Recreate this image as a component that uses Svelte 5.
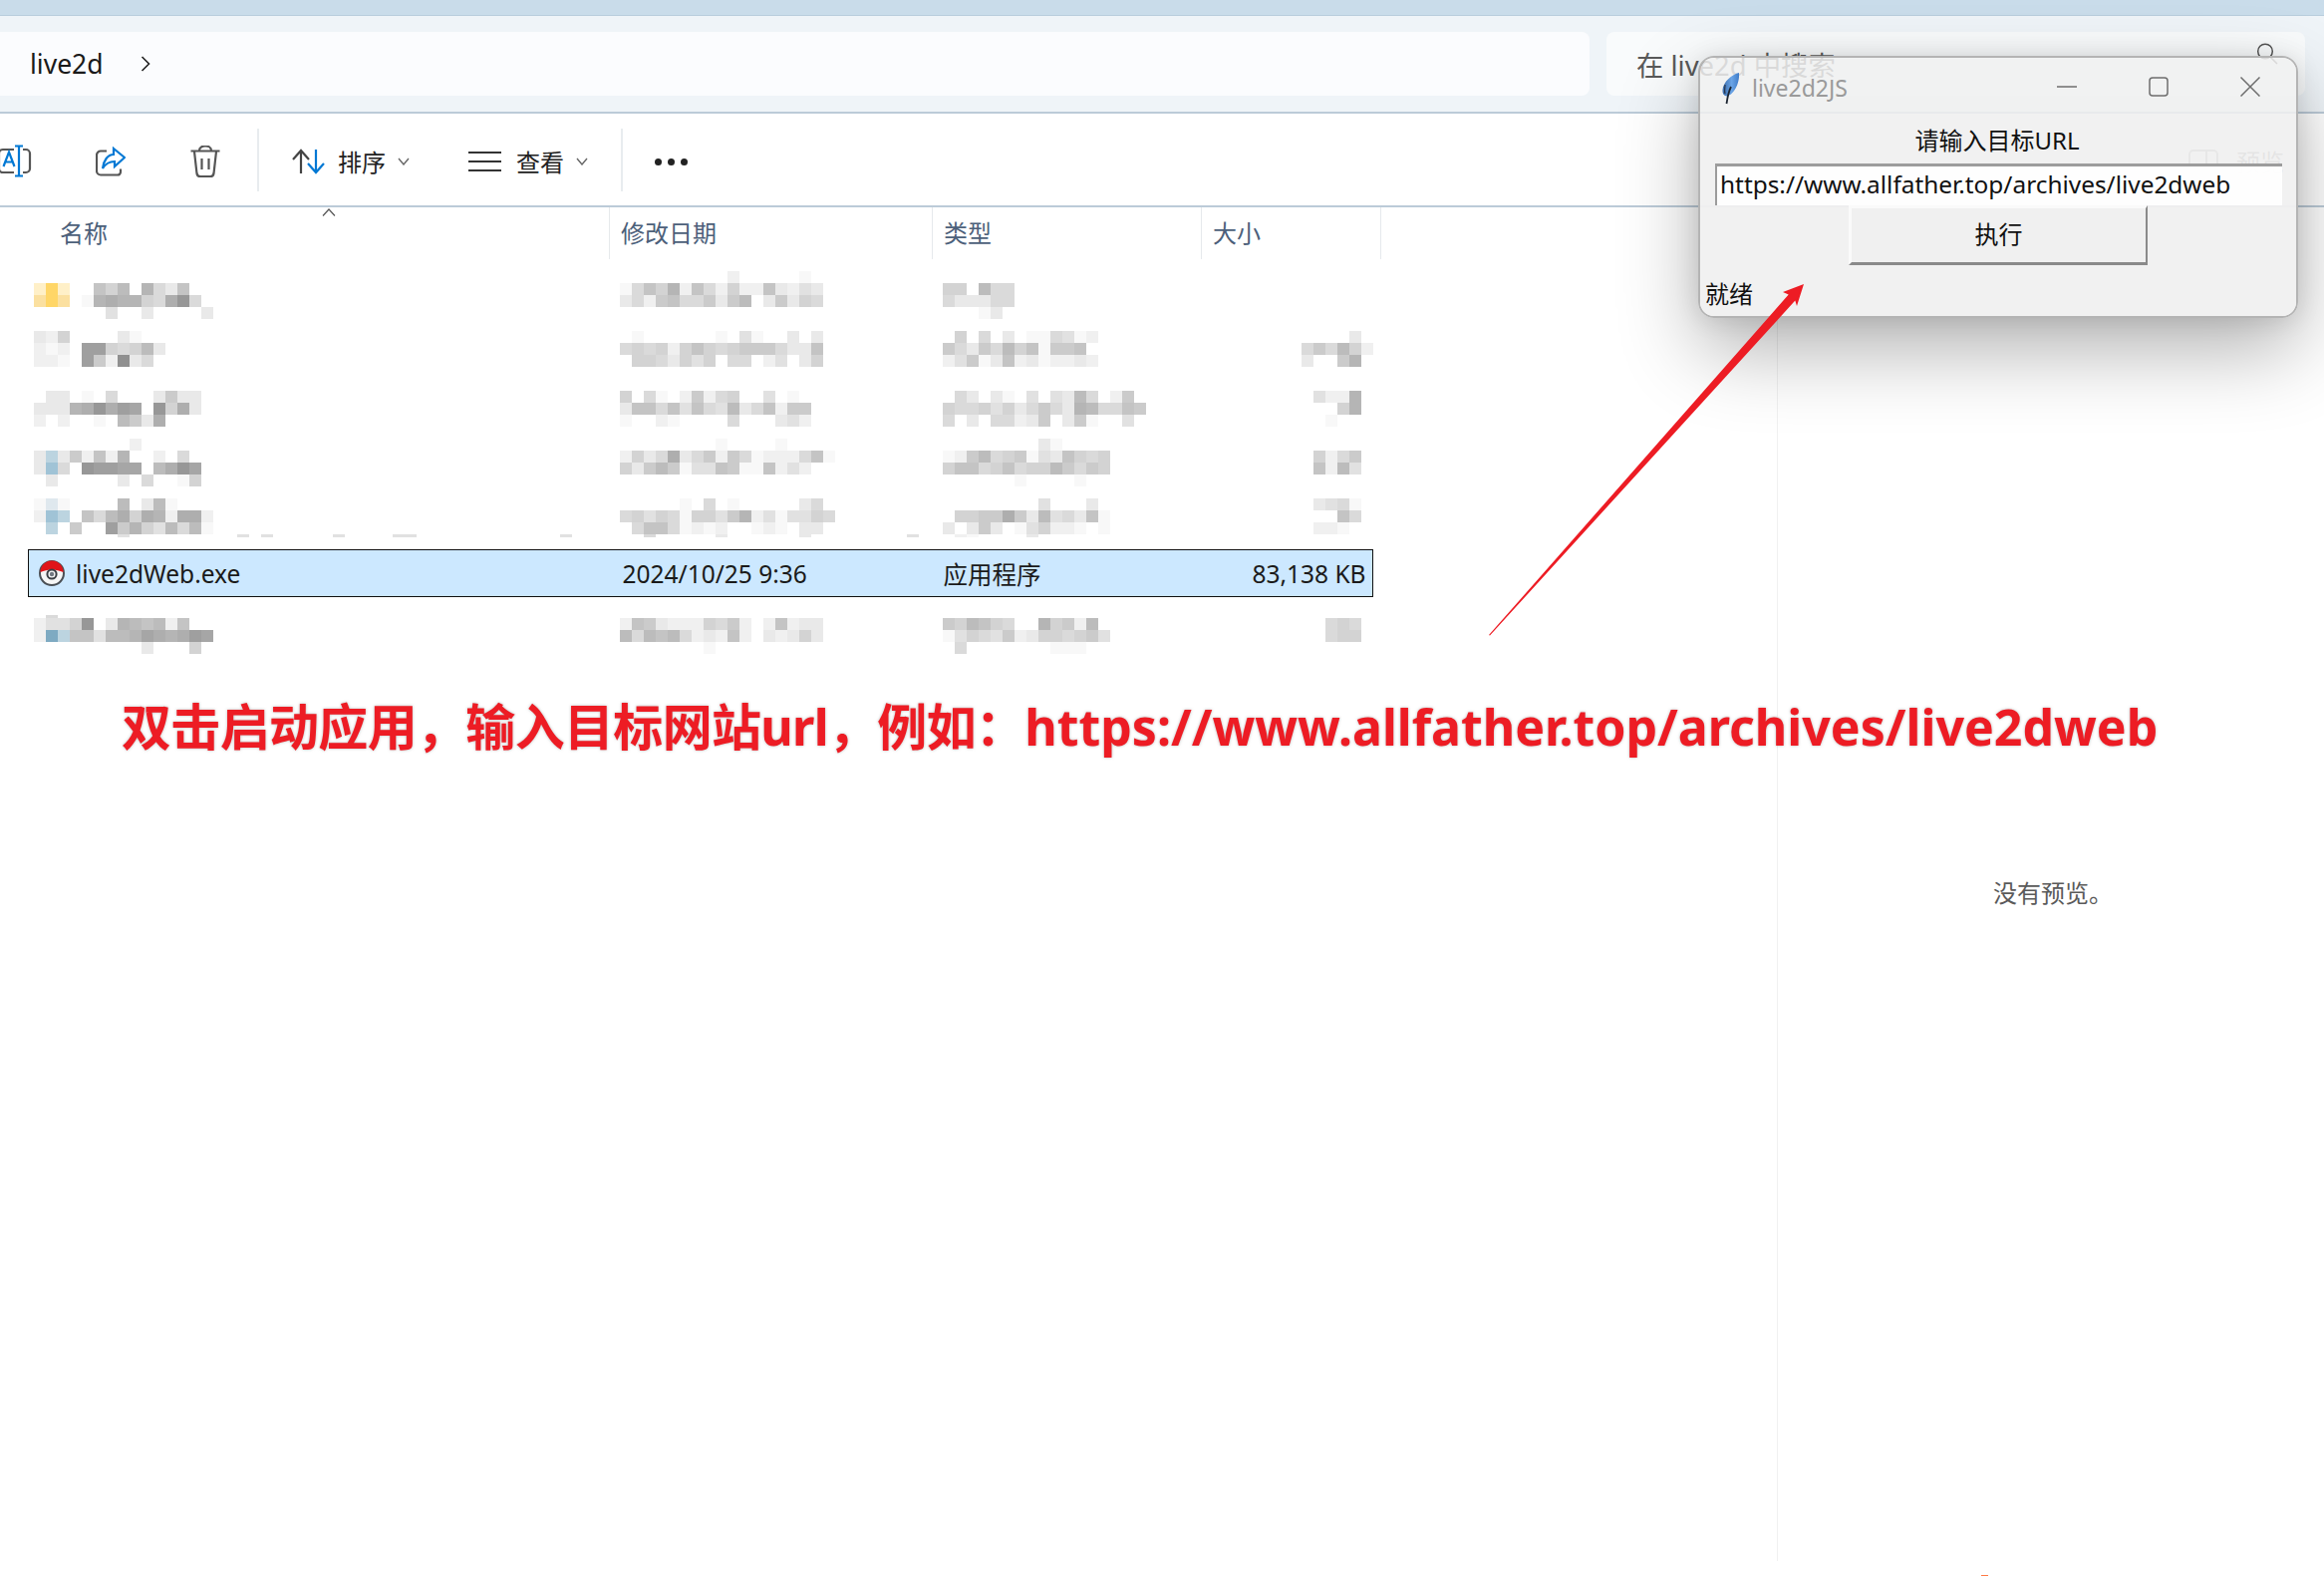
<script>
	const tints = { Y: '#ffd667', y: '#fff0c8', Z: '#fbe0a0', B: '#a0c3d6', C: '#bcd4e0', D: '#dfe8ee', G: '#7eaac2' };

	// blurred file rows: one string per 12px line, hex digit = grey level
	const rows = [
		{
			gap: 0,
			name: ['', 'yYy..796.5ac7', 'ZYZ.e54559a41a', '......b..c....c'],
			date: ['.........d.....e', 'ea795d7ad9dd7cdbc', 'cad87aa8c86.c8c9a', ''],
			type: ['', '99.6aa', 'acccaa', '...ec'],
			size: []
		},
		{
			gap: 12,
			name: ['cd9....ce', 'ded.229a96c', 'dde.28d0ca'],
			date: ['.e......e.be..c.c', 'a9a9d979a9888acc7', '.99ac9b9.aa.db.c9'],
			type: ['.9.a.c.eeabed', '8ac8a697e887', 'db8ec7dceddcd'],
			size: ['....c', 'a8a69d', 'c..85']
		},
		{
			gap: 24,
			name: ['.cc.e.a...c8cc', 'ccc541423.194c', 'd.d..e.68c4'],
			date: ['9.ae.d8da9..b.e', 'c77a7b7ab6ca7d88', 'e..de....a...cbd'],
			type: ['.ac.ce.b.bc6a.d8', '9aa9b9ca8ac56aa78', 'a.c.aadc8.c8e..b'],
			size: ['.bdd5', '...95', '..e']
		},
		{
			gap: 12,
			name: ['........d', 'cCc8d7d5..d.a', 'cBa.12233.6413', '.c.....c.a..e9'],
			date: ['........e....e', 'd9ca4ca8d8aeddda7e', '9c868ebb78ee7dbd', ''],
			type: ['........ce', 'ed86a98ebc79a9', '977a97a9968a89', '......e....e'],
			size: ['', '.9da8', '.7d6b', '']
		},
		{
			gap: 12,
			name: ['eDe....6.c6e', 'dBC.7a64945d44d', '.C.8..2859b6a6e', '~.......b.........b.b.....b....bb............b'],
			date: ['.....e.a.e.....ca', 'a9b9ae99b85dbebb9a', '.a77aeded..ede.cc', '~..a.....c......c........b'],
			type: ['........b...c', '.998848c6bac7e', 'cfc8c.eb9ddefe', '~.de....c'],
			size: ['.cbae', '...7a', '.dde', '~']
		},
		{ gap: 12, selected: true },
		{
			gap: 18,
			name: ['~.a', 'dbb91.c5676d7', 'dGC77b665345423', '.........c...9'],
			date: ['~', 'd78cddd9a8d.d7dcc', '6a676adcd7d.cdc9c', '.......e'],
			type: ['~', '89679a.f598d6', 'eb9ab8dc99a98b', '.a.......eee'],
			size: ['~', '..a9a', '..a99', '']
		}
	];

	const cols = ['name', 'date', 'type', 'size'];

	function shade(c) {
		if (c === '.') return 'transparent';
		if (tints[c]) return tints[c];
		const v = Math.round(144 + parseInt(c, 16) * 7.4);
		return `rgb(${v},${v},${v})`;
	}
</script>

<div class="page">
	<div class="strip"></div>

	<div class="addressbar">
		<div class="crumbs">
			<span>live2d</span>
			<svg class="crumb-arrow" viewBox="0 0 10 16"><path d="M1.5 1l7 7-7 7" /></svg>
		</div>
		<div class="search">
			<span>在 live2d 中搜索</span>
			<svg class="search-icon" viewBox="0 0 22 22"><circle cx="9" cy="8.5" r="7.3" /><path d="M14 14l7 7" /></svg>
		</div>
	</div>

	<div class="toolbar">
		<svg class="t-rename" viewBox="0 0 32 34">
			<path class="g" d="M14 5H3a4 4 0 0 0-4 4v15a4 4 0 0 0 4 4h11M23 5h3a4 4 0 0 1 4 4v15a4 4 0 0 1-4 4h-3" />
			<path class="b" d="M19 1v31M15 1.5h8M15 31.5h8M3.5 22L9 7.5 14.5 22M5.3 17.5h7.5" />
		</svg>
		<svg class="t-share" viewBox="0 0 30 30">
			<path class="g" d="M11 4.5H5a4 4 0 0 0-4 4v16a4 4 0 0 0 4 4h17a3 3 0 0 0 3-3v-3" />
			<path class="b" d="M18 2l11 9-10 9v-5c-5 0-9 2-12 7 1-8 5-14 11-14z" />
		</svg>
		<svg class="t-trash" viewBox="0 0 30 33">
			<path class="g" d="M0.5 5.5h29M9 5c0-6 12-6 12 0M4 6l2.5 22a3.5 3.5 0 0 0 3.5 3h10a3.5 3.5 0 0 0 3.5-3L26 6M11.5 13v11M18.5 13v11" />
		</svg>
		<div class="vsep first"></div>
		<div class="tool sort">
			<svg class="t-sort" viewBox="0 0 36 28">
				<path class="d" d="M11 26V3M3 12l8-9 8 9" />
				<path class="b" d="M26 2v23M18 16l8 9 8-9" />
			</svg>
			<span>排序</span>
			<svg class="chev" viewBox="0 0 12 8"><path d="M1 1l5 6 5-6" /></svg>
		</div>
		<div class="tool view">
			<svg class="t-view" viewBox="0 0 33 22">
				<path d="M0 2h33M0 11h33M0 20h33" />
			</svg>
			<span>查看</span>
			<svg class="chev" viewBox="0 0 12 8"><path d="M1 1l5 6 5-6" /></svg>
		</div>
		<div class="vsep"></div>
		<div class="dots"><i></i><i></i><i></i></div>
		<div class="preview-toggle">
			<svg viewBox="0 0 30 24"><rect x="1" y="1" width="28" height="22" rx="4" /><path d="M18 1v22" /></svg>
			<span>预览</span>
		</div>
	</div>

	<div class="main">
		<div class="files">
			<div class="header">
				<div class="col c-name">名称<svg class="caret" viewBox="0 0 14 8"><path d="M1 7.5l6-6.5 6 6.5" /></svg></div>
				<div class="col c-date">修改日期</div>
				<div class="col c-type">类型</div>
				<div class="col c-size">大小</div>
			</div>

			<div class="list">
				{#each rows as row}
					{#if row.selected}
						<div class="selected" style:margin-top="{row.gap}px">
							<div class="sel-name">
								<svg class="ball" viewBox="0 0 26 26">
									<circle cx="13" cy="13" r="12" fill="#f6f6f6" stroke="#4a4f55" stroke-width="2" />
									<path d="M1.5 12a11.5 11.5 0 0 1 23 0c-4-1.5-7-2.5-11.5-2.5S5.5 10.5 1.5 12z" fill="#e0141a" />
									<circle cx="13" cy="14" r="4.6" fill="#f6f6f6" stroke="#3c4046" stroke-width="2" />
									<circle cx="13" cy="14" r="2.2" fill="#707780" />
								</svg>
								<span>live2dWeb.exe</span>
							</div>
							<div>2024/10/25 9:36</div>
							<div>应用程序</div>
							<div>83,138 KB</div>
						</div>
					{:else}
						<div class="frow" style:margin-top="{row.gap}px">
							{#each cols as col}
								<div>
									{#each row[col] as line}
										<div class="line" class:thin={line[0] === '~'}>
											{#each line.replace('~', '') as c}
												<i style:background={shade(c)}></i>
											{/each}
										</div>
									{/each}
								</div>
							{/each}
						</div>
					{/if}
				{/each}
			</div>
		</div>

		<div class="preview">
			<span>没有预览。</span>
		</div>
	</div>

	<div class="note"><span class="note-cn">双击启动应用，输入目标网站url，例如：</span>https://www.allfather.top/archives/live2dweb</div>

	<div class="dialog">
		<div class="titlebar">
			<svg class="feather" viewBox="0 0 18 33">
				<defs>
					<linearGradient id="leaf" x1="0" y1="0" x2="1" y2="0">
						<stop offset="0" stop-color="#3a6cab" />
						<stop offset="0.55" stop-color="#6aa4e6" />
						<stop offset="1" stop-color="#3f7cc8" />
					</linearGradient>
				</defs>
				<path d="M17 1C10 2.5 1 10 .5 18.5c-.2 3 1 5.5 4 6C11 24 18 12 17 1z" fill="url(#leaf)" />
				<path d="M9 15C7 19 5.5 25 4.5 32" fill="none" stroke="#1d2633" stroke-width="1.8" />
				<path d="M3 13c0 3-1 6 0 9" fill="none" stroke="#26344a" stroke-width="1.2" />
			</svg>
			<span class="win-title">live2d2JS</span>
			<div class="win-buttons">
				<svg class="min" viewBox="0 0 20 2"><path d="M0 1h20" /></svg>
				<svg class="max" viewBox="0 0 20 20"><rect x="1" y="1" width="18" height="18" rx="3" /></svg>
				<svg class="close" viewBox="0 0 20 20"><path d="M.5 .5l19 19M19.5 .5l-19 19" /></svg>
			</div>
		</div>
		<div class="win-body">
			<div class="label">请输入目标URL</div>
			<div class="entry">https://www.allfather.top/archives/live2dweb</div>
			<div class="run">执行</div>
			<div class="status">就绪</div>
		</div>
	</div>

	<svg class="overlay" viewBox="0 0 2332 1581">
		<polygon points="1810,285 1803,307 1801.3,301.6 1495,637.5 1494,637 1794.7,295.6 1789,293" fill="#ed1c24" />
		<rect x="1988" y="1580" width="7" height="1" fill="#ff7a45" />
	</svg>
</div>

<style>
	:global(body) {
		margin: 0;
		background: #fff;
	}

	.page {
		position: relative;
		width: 2332px;
		height: 1581px;
		overflow: hidden;
		background: #fff;
		color: #1a1a1a;
		font-family: "Noto Sans", "Noto Sans CJK SC", sans-serif;
	}

	.strip {
		height: 15px;
		background: #c9dcea;
		border-bottom: 1px solid #b9cddc;
	}

	.addressbar {
		height: 98px;
		box-sizing: border-box;
		padding: 16px 19px 16px 0;
		display: flex;
		gap: 17px;
		background: #eff4f8;
		border-bottom: 2px solid #bccbd8;
	}

	.crumbs {
		width: 1595px;
		box-sizing: border-box;
		padding-left: 30px;
		display: flex;
		align-items: center;
		gap: 37px;
		background: #fbfcfe;
		border-radius: 0 8px 8px 0;
		font-size: 26.5px;
	}

	.crumb-arrow {
		width: 10px;
		height: 16px;
		fill: none;
		stroke: #222;
		stroke-width: 1.6;
	}

	.search {
		flex: 1;
		display: flex;
		align-items: center;
		justify-content: space-between;
		padding: 0 27px 0 30px;
		background: #f9fbfc;
		border-radius: 8px;
		color: #5a5a5a;
		font-size: 27.4px;
	}

	.search-icon {
		width: 22px;
		height: 22px;
		margin-top: -20px;
		fill: none;
		stroke: #555;
		stroke-width: 1.5;
	}

	.toolbar {
		height: 94px;
		box-sizing: border-box;
		padding-top: 4px;
		display: flex;
		align-items: center;
		border-bottom: 2px solid #bccbd8;
		font-size: 24px;
		color: #222;
	}

	.toolbar svg {
		display: block;
		flex: none;
		fill: none;
		stroke-width: 2.2;
	}

	.toolbar span {
		margin-top: -2px;
	}

	.g {
		stroke: #555;
	}

	.b {
		stroke: #0078d4;
	}

	.d {
		stroke: #444;
	}

	.t-rename {
		width: 32px;
		height: 34px;
	}

	.t-share {
		width: 30px;
		height: 30px;
		margin-left: 64px;
	}

	.t-trash {
		width: 30px;
		height: 33px;
		margin-left: 65px;
	}

	.vsep {
		width: 2px;
		height: 63px;
		margin-top: -4px;
		background: #e8ecef;
		flex: none;
		margin-left: 33px;
	}

	.vsep.first {
		margin-left: 37px;
	}

	.tool {
		display: flex;
		align-items: center;
		margin-left: 31px;
	}

	.t-sort {
		width: 36px;
		height: 28px;
	}

	.sort span {
		margin-left: 12px;
	}

	.chev {
		width: 12px;
		height: 8px;
		margin-left: 12px;
		stroke: #666;
		stroke-width: 1.4 !important;
	}

	.view {
		margin-left: 59px;
	}

	.t-view {
		width: 33px;
		height: 22px;
		stroke: #333;
	}

	.view span {
		margin-left: 15px;
	}

	.dots {
		display: flex;
		gap: 6px;
		margin-left: 32px;
	}

	.dots i {
		width: 7px;
		height: 7px;
		border-radius: 50%;
		background: #222;
	}

	.preview-toggle {
		display: flex;
		align-items: center;
		gap: 18px;
		margin-left: auto;
		margin-right: 40px;
		color: #1a1a1a;
	}

	.preview-toggle svg {
		width: 30px;
		height: 24px;
		stroke: #555;
		stroke-width: 2;
	}

	.main {
		display: flex;
		height: 1358px;
	}

	.files {
		width: 1783px;
		border-right: 1px solid #f0f0f0;
		flex: none;
	}

	.header {
		display: flex;
		box-sizing: border-box;
		height: 52px;
		font-size: 24px;
		color: #4c607a;
	}

	.col {
		position: relative;
		box-sizing: border-box;
		display: flex;
		align-items: center;
		padding-left: 11px;
		padding-bottom: 3px;
		border-right: 1px solid #e6e9ec;
	}

	.c-name {
		width: 612px;
		padding-left: 60px;
	}

	.c-date {
		width: 324px;
	}

	.c-type {
		width: 270px;
	}

	.c-size {
		width: 180px;
	}

	.caret {
		position: absolute;
		left: 323px;
		top: 1px;
		width: 14px;
		height: 8px;
		fill: none;
		stroke: #555;
		stroke-width: 1.2;
	}

	.list {
		padding-top: 12px;
	}

	.frow {
		display: grid;
		grid-template-columns: 588px 324px 360px 1fr;
		margin-left: 34px;
	}

	.line {
		display: flex;
		height: 12px;
	}

	.line.thin {
		height: 3px;
	}

	.line i {
		width: 12px;
		flex: none;
	}

	.selected {
		display: grid;
		grid-template-columns: 595.5px 322px 1fr auto;
		align-items: center;
		box-sizing: border-box;
		width: 1350px;
		height: 48px;
		margin-left: 28px;
		padding-right: 6.5px;
		background: #cce8ff;
		border: 1.5px solid #111;
		font-size: 24.5px;
		color: #1a1a1a;
	}

	.sel-name {
		display: flex;
		align-items: center;
		gap: 11px;
		padding-left: 10px;
	}

	.ball {
		width: 26px;
		height: 26px;
	}

	.preview {
		flex: 1;
		padding-top: 669px;
		padding-left: 216px;
		font-size: 24px;
		color: #5a5a5a;
	}

	.note {
		position: absolute;
		left: 122px;
		top: 693px;
		white-space: nowrap;
		font-size: 50px;
		font-weight: 700;
		line-height: 72px;
		color: #ed1c24;
		text-shadow: 0 0 3px rgba(120, 120, 120, 0.55);
	}

	.note-cn {
		letter-spacing: -0.67px;
	}

	.dialog {
		position: absolute;
		left: 1704px;
		top: 56px;
		width: 602px;
		height: 263px;
		box-sizing: border-box;
		display: flex;
		flex-direction: column;
		border: 2px solid #b4b4b4;
		border-radius: 16px;
		overflow: hidden;
		box-shadow: 0 32px 80px rgba(0, 0, 0, 0.3), 0 2px 24px rgba(0, 0, 0, 0.1);
	}

	.titlebar {
		height: 56px;
		flex: none;
		display: flex;
		align-items: center;
		padding-left: 22px;
		background: rgba(240, 240, 240, 0.85);
	}

	.feather {
		width: 18px;
		height: 33px;
		margin-top: 4px;
	}

	.win-title {
		margin-left: 12px;
		margin-top: 4px;
		font-size: 23px;
		color: #9a9a9a;
	}

	.win-buttons {
		margin-left: auto;
		display: flex;
		align-items: center;
		padding-right: 36px;
		padding-top: 2px;
	}

	.win-buttons svg {
		display: block;
		width: 20px;
		height: 20px;
		fill: none;
		stroke: #6e6e6e;
		stroke-width: 1.5;
	}

	.win-buttons .min {
		height: 2px;
		margin-right: 72px;
	}

	.win-buttons .max {
		margin-right: 72px;
	}

	.win-body {
		flex: 1;
		display: flex;
		flex-direction: column;
		background: rgba(240, 240, 240, 0.945);
		color: #111;
		font-size: 24px;
	}

	.label {
		height: 50px;
		text-align: center;
		line-height: 54px;
		padding-right: 2px;
	}

	.entry {
		height: 42px;
		box-sizing: border-box;
		margin: 0 14px 0 15px;
		padding-left: 3px;
		background: rgba(255, 255, 255, 0.93);
		border-top: 3px solid #9c9c9c;
		border-left: 2px solid #9c9c9c;
		font-size: 24.4px;
		line-height: 36px;
		white-space: nowrap;
	}

	.run {
		width: 300px;
		height: 60px;
		box-sizing: border-box;
		margin-left: 149px;
		padding-bottom: 6px;
		display: flex;
		align-items: center;
		justify-content: center;
		border: 3px solid;
		border-color: #fafafa #8a8a8a #8a8a8a #fafafa;
		border-right-width: 2px;
		background: #f0f0f0;
	}

	.status {
		margin-left: 5px;
		margin-top: 13px;
		line-height: 32px;
	}

	.overlay {
		position: absolute;
		left: 0;
		top: 0;
		width: 2332px;
		height: 1581px;
		pointer-events: none;
	}
</style>
